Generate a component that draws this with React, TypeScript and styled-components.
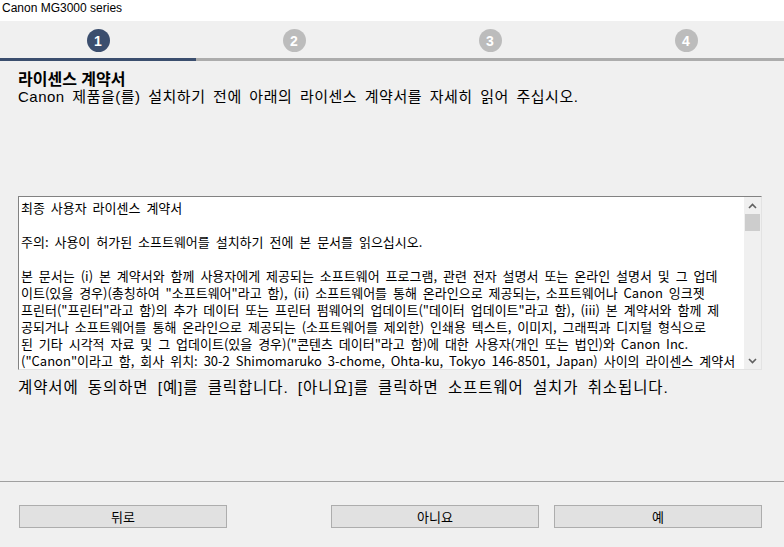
import * as React from "react";
import styled, { createGlobalStyle } from "styled-components";

const GlobalStyle = createGlobalStyle`
  html, body {
    margin: 0;
    padding: 0;
    background: #f0f0f0;
  }
  body {
    font-family: "Noto Sans CJK KR", "Liberation Sans", sans-serif;
    color: #000;
  }
`;

const Window = styled.div`
  width: 784px;
  height: 547px;
  display: flex;
  flex-direction: column;
  background: #f0f0f0;
  overflow: hidden;
`;

const TitleBar = styled.div`
  height: 21px;
  background: #fff;
  font-family: "Liberation Sans", "Noto Sans CJK KR", sans-serif;
  font-size: 12px;
  line-height: 16px;
  padding-left: 2px;
`;

const Steps = styled.div`
  display: grid;
  grid-template-columns: repeat(4, 1fr);
  height: 37px;
  align-items: center;
`;

const StepDot = styled.div<{ $active: boolean }>`
  justify-self: center;
  width: 23px;
  height: 23px;
  border-radius: 50%;
  background: ${(p) => (p.$active ? "#3b4e6e" : "#bcbcbc")};
  color: #fff;
  font-family: "Liberation Sans", sans-serif;
  font-weight: bold;
  font-size: 14px;
  display: flex;
  align-items: center;
  justify-content: center;
  margin-top: 2px;
`;

const Progress = styled.div`
  display: grid;
  grid-template-columns: repeat(4, 1fr);
  height: 3px;
`;

const ProgressSeg = styled.div<{ $done: boolean }>`
  background: ${(p) => (p.$done ? "#3b4e6e" : "#acacac")};
`;

const Content = styled.div`
  padding: 0 22px 0 18px;
  display: flex;
  flex-direction: column;
`;

const Heading = styled.h1`
  margin: 10px 0 0;
  font-family: "Liberation Sans", "Noto Sans CJK KR", sans-serif;
  font-size: 16px;
  font-weight: bold;
  line-height: 18px;
`;

const Lead = styled.p`
  margin: 0;
  font-family: "Liberation Sans", "Noto Sans CJK KR", sans-serif;
  font-size: 15px;
  line-height: 16px;
  word-spacing: 3px;
  letter-spacing: 0.5px;
`;

const TextBox = styled.div`
  margin-top: 91px;
  height: 172px;
  display: flex;
  background: #fff;
  border-top: 1px solid #828282;
  border-left: 1px solid #828282;
  border-right: 1px solid #e3e3e3;
  border-bottom: 1px solid #e3e3e3;
`;

const TextBody = styled.div`
  flex: 1;
  overflow: hidden;
  padding: 2px 0 0 2px;
  font-size: 13px;
  line-height: 17px;
  white-space: pre;
  word-spacing: 3px;
`;

const Line = styled.div`
  height: 17px;
`;

const ScrollBar = styled.div`
  width: 17px;
  background: #f0f0f0;
  display: flex;
  flex-direction: column;
  align-items: center;
`;

const ScrollArrow = styled.div`
  height: 17px;
  width: 17px;
  display: flex;
  align-items: center;
  justify-content: center;
`;

const Thumb = styled.div`
  width: 15px;
  height: 17px;
  background: #cdcdcd;
`;

const Track = styled.div`
  flex: 1;
`;

const Note = styled.p`
  margin: 8px 0 0;
  font-family: "Liberation Sans", "Noto Sans CJK KR", sans-serif;
  font-size: 15.5px;
  line-height: 20px;
  word-spacing: 4px;
  letter-spacing: 0.9px;
`;

const Spacer = styled.div`
  flex: 1;
`;

const Separator = styled.div`
  height: 1px;
  background: #a0a0a0;
`;

const Footer = styled.div`
  display: flex;
  justify-content: space-between;
  padding: 23px 22px 19px 19px;
`;

const ButtonGroup = styled.div`
  display: flex;
  gap: 15px;
`;

const Button = styled.button`
  height: 23px;
  width: 208px;
  background: #e1e1e1;
  border: 1px solid #adadad;
  font-family: "Noto Sans CJK KR", sans-serif;
  font-size: 13px;
  color: #000;
  padding: 0;
  line-height: 20px;
`;

const Chevron = ({ up }: { up?: boolean }) => (
  <svg width="9" height="6" viewBox="0 0 9 6">
    <path
      d={up ? "M1 5 L4.5 1.5 L8 5" : "M1 1 L4.5 4.5 L8 1"}
      fill="none"
      stroke="#606060"
      strokeWidth="1.6"
    />
  </svg>
);

const lines = [
  "최종 사용자 라이센스 계약서",
  "",
  "주의: 사용이 허가된 소프트웨어를 설치하기 전에 본 문서를 읽으십시오.",
  "",
  "본 문서는 (i) 본 계약서와 함께 사용자에게 제공되는 소프트웨어 프로그램, 관련 전자 설명서 또는 온라인 설명서 및 그 업데",
  "이트(있을 경우)(총칭하여 \"소프트웨어\"라고 함), (ii) 소프트웨어를 통해 온라인으로 제공되는, 소프트웨어나 Canon 잉크젯",
  "프린터(\"프린터\"라고 함)의 추가 데이터 또는 프린터 펌웨어의 업데이트(\"데이터 업데이트\"라고 함), (iii) 본 계약서와 함께 제",
  "공되거나 소프트웨어를 통해 온라인으로 제공되는 (소프트웨어를 제외한) 인쇄용 텍스트, 이미지, 그래픽과 디지털 형식으로",
  "된 기타 시각적 자료 및 그 업데이트(있을 경우)(\"콘텐츠 데이터\"라고 함)에 대한 사용자(개인 또는 법인)와 Canon Inc.",
  "(\"Canon\"이라고 함, 회사 위치: 30-2 Shimomaruko 3-chome, Ohta-ku, Tokyo 146-8501, Japan) 사이의 라이센스 계약서",
];

const App = () => {
  const current = 1;
  return (
    <Window>
      <GlobalStyle />
      <TitleBar>Canon MG3000 series</TitleBar>
      <Steps>
        {[1, 2, 3, 4].map((n) => (
          <StepDot key={n} $active={n === current}>
            {n}
          </StepDot>
        ))}
      </Steps>
      <Progress>
        {[1, 2, 3, 4].map((n) => (
          <ProgressSeg key={n} $done={n <= current} />
        ))}
      </Progress>
      <Content>
        <Heading>라이센스 계약서</Heading>
        <Lead>
          Canon 제품을(를) 설치하기 전에 아래의 라이센스 계약서를 자세히 읽어 주십시오.
        </Lead>
        <TextBox>
          <TextBody>
            {lines.map((l, i) => (
              <Line key={i}>{l}</Line>
            ))}
          </TextBody>
          <ScrollBar>
            <ScrollArrow>
              <Chevron up />
            </ScrollArrow>
            <Thumb />
            <Track />
            <ScrollArrow>
              <Chevron />
            </ScrollArrow>
          </ScrollBar>
        </TextBox>
        <Note>
          계약서에 동의하면 [예]를 클릭합니다. [아니요]를 클릭하면 소프트웨어 설치가 취소됩니다.
        </Note>
      </Content>
      <Spacer />
      <Separator />
      <Footer>
        <Button>뒤로</Button>
        <ButtonGroup>
          <Button>아니요</Button>
          <Button>예</Button>
        </ButtonGroup>
      </Footer>
    </Window>
  );
};

export default App;
